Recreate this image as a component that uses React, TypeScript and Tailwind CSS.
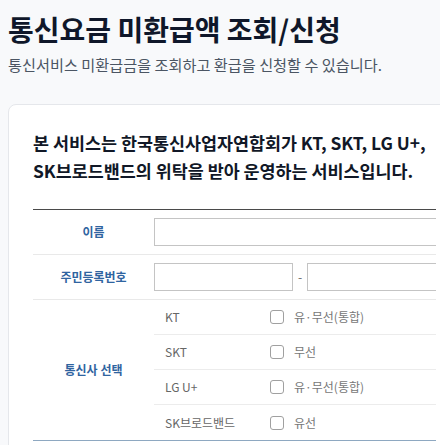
export default function App() {
  const carriers = [
    { name: "KT", type: "유·무선(통합)" },
    { name: "SKT", type: "무선" },
    { name: "LG U+", type: "유·무선(통합)" },
    { name: "SK브로드밴드", type: "유선" },
  ];
  return (
    <div
      className="h-[445px] w-[440px] overflow-hidden bg-[#f8f9fb]"
      style={{ fontFamily: '"Noto Sans CJK KR", "Noto Sans", sans-serif' }}
    >
      <div className="w-[469px] px-2 pt-[11px]">
        <h1 className="text-[28px] font-bold leading-[36px] text-[#0f172a]">
          통신요금 미환급액 조회/신청
        </h1>
        <p className="mt-[7px] text-[15.2px] leading-[20px] text-[#4b5563]">
          통신서비스 미환급금을 조회하고 환급을 신청할 수 있습니다.
        </p>
        <div className="mt-[30px] rounded-lg border border-[#e5e7eb] bg-white px-6 pb-6 pt-6">
          <p className="text-[17.4px] font-bold leading-[28px] text-[#111827]">
            본 서비스는 한국통신사업자연합회가 KT, SKT, LG U+,
            <br />
            SK브로드밴드의 위탁을 받아 운영하는 서비스입니다.
          </p>
          <div className="mt-6 overflow-hidden">
            <div className="w-[600px] border-b border-t border-b-[#8ea8c1] border-t-[#4a4a4a]">
              <div className="flex border-b border-[#e9e9e9]">
                <div className="flex w-[121px] items-center justify-center text-[12px] font-bold text-[#2f64a0]">
                  이름
                </div>
                <div className="flex-1 py-2">
                  <input className="block h-[28px] w-[420px] border border-[#c4c4c4] bg-white" />
                </div>
              </div>
              <div className="flex border-b border-[#e9e9e9]">
                <div className="flex w-[121px] items-center justify-center text-[12px] font-bold text-[#2f64a0]">
                  주민등록번호
                </div>
                <div className="flex flex-1 items-center py-2">
                  <input className="block h-[28px] w-[139px] border border-[#c4c4c4] bg-white" />
                  <span className="w-[14px] text-center text-[12px] text-[#666]">-</span>
                  <input className="block h-[28px] w-[200px] border border-[#c4c4c4] bg-white" />
                </div>
              </div>
              <div className="flex">
                <div className="flex w-[121px] items-center justify-center text-[12px] font-bold text-[#2f64a0]">
                  통신사 선택
                </div>
                <div className="flex-1">
                  {carriers.map((c, i) => (
                    <div
                      key={c.name}
                      className={
                        i < 3
                          ? "flex h-[35px] items-center border-b border-[#ececec]"
                          : "flex h-[35px] items-center"
                      }
                    >
                      <div className="w-[106px] pl-[11px] text-[12px] text-[#666]">{c.name}</div>
                      <div className="flex items-center gap-[10px] pl-[10px]">
                        <span className="block h-[14px] w-[14px] rounded-[3px] border-[1.5px] border-[#a0a0a0] bg-white" />
                        <span className="text-[12px] text-[#777]">{c.type}</span>
                      </div>
                    </div>
                  ))}
                </div>
              </div>
            </div>
          </div>
        </div>
      </div>
    </div>
  );
}
